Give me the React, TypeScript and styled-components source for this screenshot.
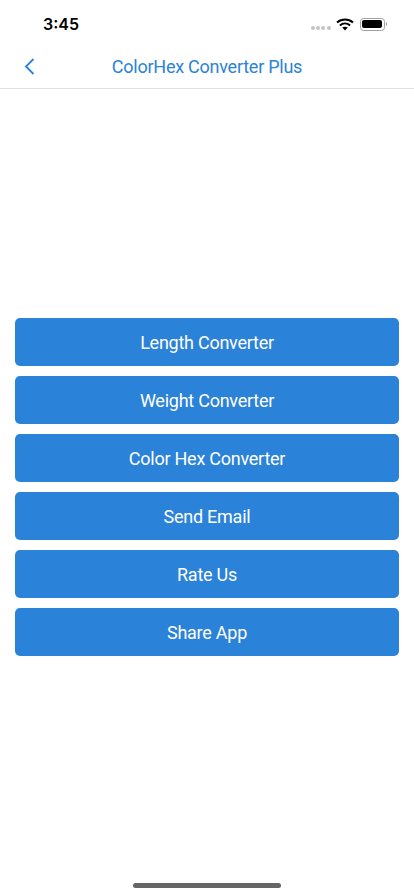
import { createGlobalStyle, styled } from 'styled-components'

const menuItems = [
  'Length Converter',
  'Weight Converter',
  'Color Hex Converter',
  'Send Email',
  'Rate Us',
  'Share App',
]

const App = () => {
  return (
    <>
      <Global />
      <Screen>
        <StatusBar>
          <Time>3:45</Time>
          <StatusIcons>
            <Signal>
              <Dot />
              <Dot />
              <Dot />
              <Dot />
            </Signal>
            <svg width="18" height="13" viewBox="0 0 18 13" fill="none">
              <path d="M1 4.6C5.6 0.5 12.4 0.5 17 4.6" stroke="#000" strokeWidth="2" />
              <path d="M3.9 7.5C6.9 4.9 11.1 4.9 14.1 7.5" stroke="#000" strokeWidth="2" />
              <path d="M6.2 9.6L9 12.6L11.8 9.6C10.1 8.3 7.9 8.3 6.2 9.6Z" fill="#000" />
            </svg>
            <Battery>
              <BatteryFill />
            </Battery>
            <BatteryCap />
          </StatusIcons>
        </StatusBar>
        <NavBar>
          <BackButton aria-label="Back">
            <svg width="11" height="17" viewBox="0 0 11 17" fill="none">
              <path d="M9.5 1L2 8.5L9.5 16" stroke="#2b82d9" strokeWidth="1.8" />
            </svg>
          </BackButton>
          <Title>ColorHex Converter Plus</Title>
        </NavBar>
        <Content>
          <Menu>
            {menuItems.map((item) => (
              <MenuButton key={item}>{item}</MenuButton>
            ))}
          </Menu>
        </Content>
        <HomeBar>
          <HomeIndicator />
        </HomeBar>
      </Screen>
    </>
  )
}

export default App

const Global = createGlobalStyle`
  html, body {
    margin: 0;
    padding: 0;
    background: #fff;
  }
  * {
    box-sizing: border-box;
  }
`

const Screen = styled.div`
  width: 414px;
  height: 896px;
  display: flex;
  flex-direction: column;
  font-family: Roboto, "Liberation Sans", sans-serif;
  overflow: hidden;
`

const StatusBar = styled.div`
  height: 44px;
  display: flex;
  align-items: center;
  justify-content: space-between;
  padding: 4px 27px 0 43px;
`

const Time = styled.span`
  font-family: Inter, "Liberation Sans", sans-serif;
  font-size: 16px;
  font-weight: 600;
  color: #000;
`

const StatusIcons = styled.div`
  display: flex;
  align-items: center;
`

const Signal = styled.div`
  display: flex;
  gap: 1.3px;
  margin: 8px 5px 0 0;
`

const Dot = styled.span`
  width: 4px;
  height: 4px;
  border-radius: 50%;
  background: #c4c4c4;
`

const Battery = styled.div`
  width: 25px;
  height: 13px;
  margin-left: 6px;
  padding: 1.5px;
  border: 1px solid #a0a0a0;
  border-radius: 3.5px;
`

const BatteryFill = styled.div`
  width: 100%;
  height: 100%;
  border-radius: 2px;
  background: #000;
`

const BatteryCap = styled.div`
  width: 1.5px;
  height: 4px;
  margin-left: 1px;
  border-radius: 0 1px 1px 0;
  background: #a0a0a0;
`

const NavBar = styled.header`
  height: 45px;
  display: flex;
  align-items: center;
  justify-content: center;
  position: relative;
  border-bottom: 1px solid #e0e0e0;
`

const BackButton = styled.button`
  position: absolute;
  left: 24px;
  top: 14px;
  padding: 0;
  border: 0;
  background: none;
  line-height: 0;
`

const Title = styled.h1`
  margin: 0;
  font-size: 18px;
  font-weight: 400;
  letter-spacing: -0.25px;
  color: #2b82d9;
`

const Content = styled.main`
  flex: 1;
  padding: 229px 15px 0;
`

const Menu = styled.div`
  display: flex;
  flex-direction: column;
  gap: 10px;
`

const MenuButton = styled.button`
  width: 100%;
  height: 48px;
  padding: 0;
  border: 0;
  border-radius: 5px;
  background: #2b82d9;
  color: #fff;
  font-family: inherit;
  font-size: 18px;
  font-weight: 400;
  letter-spacing: -0.25px;
`

const HomeBar = styled.div`
  height: 13px;
  display: flex;
  justify-content: center;
`

const HomeIndicator = styled.div`
  width: 148px;
  height: 5px;
  border-radius: 3px;
  background: #666;
`
